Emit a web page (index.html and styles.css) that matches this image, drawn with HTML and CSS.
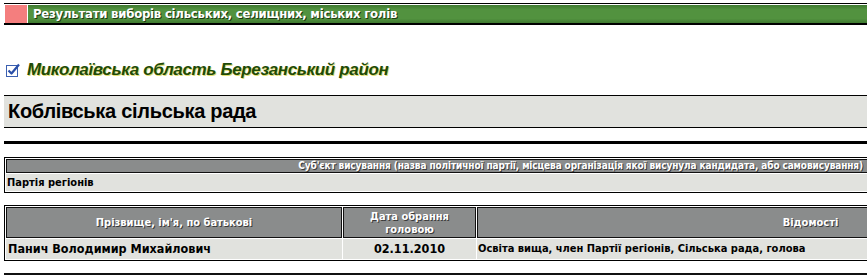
FILE: index.html
```html
<!DOCTYPE html>
<html lang="uk">
<head>
<meta charset="utf-8">
<title>Результати виборів</title>
<link rel="stylesheet" href="styles.css">
</head>
<body>
<div class="viewport">
  <div class="page">
    <div class="topbar">
      <span class="mark"></span>
      <div class="title">Результати виборів сільських, селищних, міських голів</div>
    </div>

    <h2 class="region">
      <svg class="check" width="14" height="14" viewBox="0 0 14 14" aria-hidden="true">
        <rect x="0.5" y="2.5" width="11" height="11" fill="#ffffff" stroke="#3b5fb0" stroke-width="1"/>
        <path d="M2.5 7.5 L5.5 10.5 L13 1.5" fill="none" stroke="#2a4fa8" stroke-width="2.2" stroke-linejoin="round"/>
      </svg>
      <span>Миколаївська область Березанський район</span>
    </h2>

    <div class="council">Коблівська сільська рада</div>

    <div class="rule-thick"></div>

    <table class="grid t1">
      <tr><th>Суб'єкт висування (назва політичної партії, місцева організація якої висунула кандидата, або самовисування)</th></tr>
      <tr><td>Партія регіонів</td></tr>
    </table>

    <table class="grid t2">
      <colgroup>
        <col class="c-name"><col class="c-date"><col class="c-info">
      </colgroup>
      <tr>
        <th>Прізвище, ім'я, по батькові</th>
        <th>Дата обрання<br>головою</th>
        <th>Відомості</th>
      </tr>
      <tr>
        <td class="name">Панич Володимир Михайлович</td>
        <td class="date">02.11.2010</td>
        <td class="info">Освіта вища, член Партії регіонів, Сільська рада, голова</td>
      </tr>
    </table>

    <div class="rule-thin"></div>
  </div>
</div>
</body>
</html>
```

FILE: styles.css
```css
html, body {
  margin: 0;
  padding: 0;
  background: #ffffff;
}

.viewport {
  width: 100%;
  overflow: hidden;
}

.page {
  width: 1150px;
  padding-left: 4px;
  padding-top: 3px;
  box-sizing: border-box;
  font-family: "DejaVu Sans", "Liberation Sans", sans-serif;
  font-stretch: condensed;
}

/* top title bar */
.topbar {
  display: flex;
  height: 18px;
  padding: 1px 0 0 1px;
  border-top: 1px solid #000;
  border-bottom: 2px solid #000;
}

.mark {
  width: 22px;
  margin-right: 1px;
  background: #f47e7e;
}

.title {
  flex: 1;
  padding-left: 5px;
  background: linear-gradient(#3f7a30, #52923f 25%, #52923f 75%, #3f7a30);
  color: #ffffff;
  font-weight: bold;
  font-size: 13px;
  letter-spacing: -0.23px;
  line-height: 18px;
  text-shadow: 1px 1px 0 #1d3a12;
  white-space: nowrap;
}

/* region heading */
.region {
  display: flex;
  align-items: center;
  gap: 7px;
  height: 20px;
  margin: 35px 0 0 2px;
  font-family: "Liberation Sans", Arial, sans-serif;
  font-stretch: normal;
  font-size: 17px;
  letter-spacing: -0.35px;
  font-style: italic;
  font-weight: bold;
  color: #1e4a08;
  text-shadow: 1px 1px 0 #e2de70;
}

.check {
  flex: none;
}

/* council box */
.council {
  margin-top: 15px;
  height: 31px;
  padding-left: 4px;
  border-top: 1px solid #000;
  border-bottom: 1px solid #000;
  background: #e1e2de;
  font-family: "Liberation Sans", Arial, sans-serif;
  font-stretch: normal;
  font-size: 20px;
  letter-spacing: -0.3px;
  font-weight: bold;
  line-height: 31px;
  color: #000;
}

.rule-thick {
  margin-top: 13px;
  height: 3px;
  background: #000;
}

.rule-thin {
  margin-top: 12px;
  height: 2px;
  background: #111;
}

/* tables */
.grid {
  width: 1142px;
  border: 1px solid #000;
  border-spacing: 1px;
  table-layout: fixed;
}

.grid th {
  background: #8a8c8c;
  border: 1px solid #111;
  color: #ffffff;
  font-weight: bold;
  text-shadow: 1px 1px 0 #3a3a3a;
  padding: 0;
}

.grid td {
  background: #e1e2de;
  color: #000;
  font-weight: bold;
  padding: 0 1px;
  white-space: nowrap;
}

.t1 {
  margin-top: 13px;
}

.t1 th {
  font-size: 10px;
  letter-spacing: -0.12px;
  line-height: 12px;
  text-align: right;
  padding-right: 280px;
  white-space: nowrap;
}

.t1 td {
  font-size: 11px;
  line-height: 17px;
}

.t2 {
  margin-top: 12px;
}

.t2 .c-name { width: 336px; }
.t2 .c-date { width: 133px; }

.t2 th {
  height: 29px;
  font-size: 11px;
  line-height: 13px;
}

.t2 td {
  height: 20px;
  font-size: 12.5px;
  line-height: 20px;
}

.t2 .name { padding-left: 2px; }
.t2 .date { text-align: center; }
.t2 .info {
  padding-left: 1px;
  font-size: 11px;
}
```
